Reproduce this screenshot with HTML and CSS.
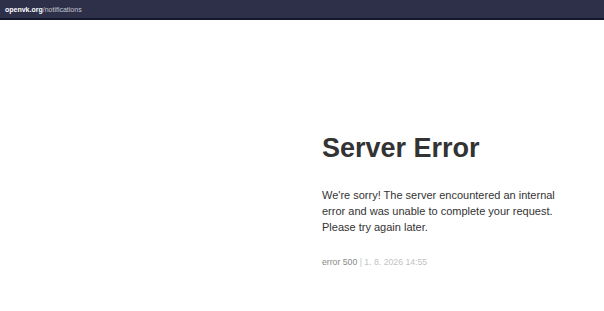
FILE: index.html
```html
<!DOCTYPE html>
<html lang="en">
<head>
    <meta charset="UTF-8">
    <meta name="viewport" content="width=device-width, initial-scale=1.0">
    <title>Server Error</title>
    <link rel="stylesheet" href="styles.css">
</head>
<body>
    <!-- address bar -->
    <div class="topbar">
        <span class="host">openvk.org</span><span class="path">/notifications</span>
    </div>

    <div class="page">
        <div class="side"></div>
        <div class="content">
            <h1 class="title">Server Error</h1>
            <p class="message">
                We're sorry! The server encountered an internal
                error and was unable to complete your request.
                Please try again later.
            </p>
            <div class="meta">
                <span class="code">error 500</span> <span class="date">| 1. 8. 2026 14:55</span>
            </div>
        </div>
    </div>
</body>
</html>
```

FILE: styles.css
```css
* {
    box-sizing: border-box;
}
html, body {
    height: 100%;
}
body {
    margin: 0;
    background: #fff;
    font-family: 'Liberation Sans', Arial, sans-serif;
    color: #333;
}
.topbar {
    height: 20px;
    background: #2d3048;
    border-bottom: 2px solid #14162a;
    padding: 0 5px;
    display: flex;
    align-items: center;
    font-size: 7px;
}
.host { color: #fff; font-weight: bold; }
.path { color: #c3c6d4; }

.page {
    display: grid;
    grid-template-columns: 1fr 1fr;
}
.content {
    padding: 112px 20px 0 20px;
}
.title {
    margin: 0;
    font-size: 27px;
    font-weight: bold;
    line-height: 1.2;
    color: #333;
}
.message {
    max-width: 236px;
    margin: 23px 0 0;
    font-size: 11px;
    line-height: 16px;
    color: #333;
}
.meta {
    margin-top: 22px;
    font-size: 8.7px;
}
.code { color: #888; }
.date { color: #c2c2c2; }
```
